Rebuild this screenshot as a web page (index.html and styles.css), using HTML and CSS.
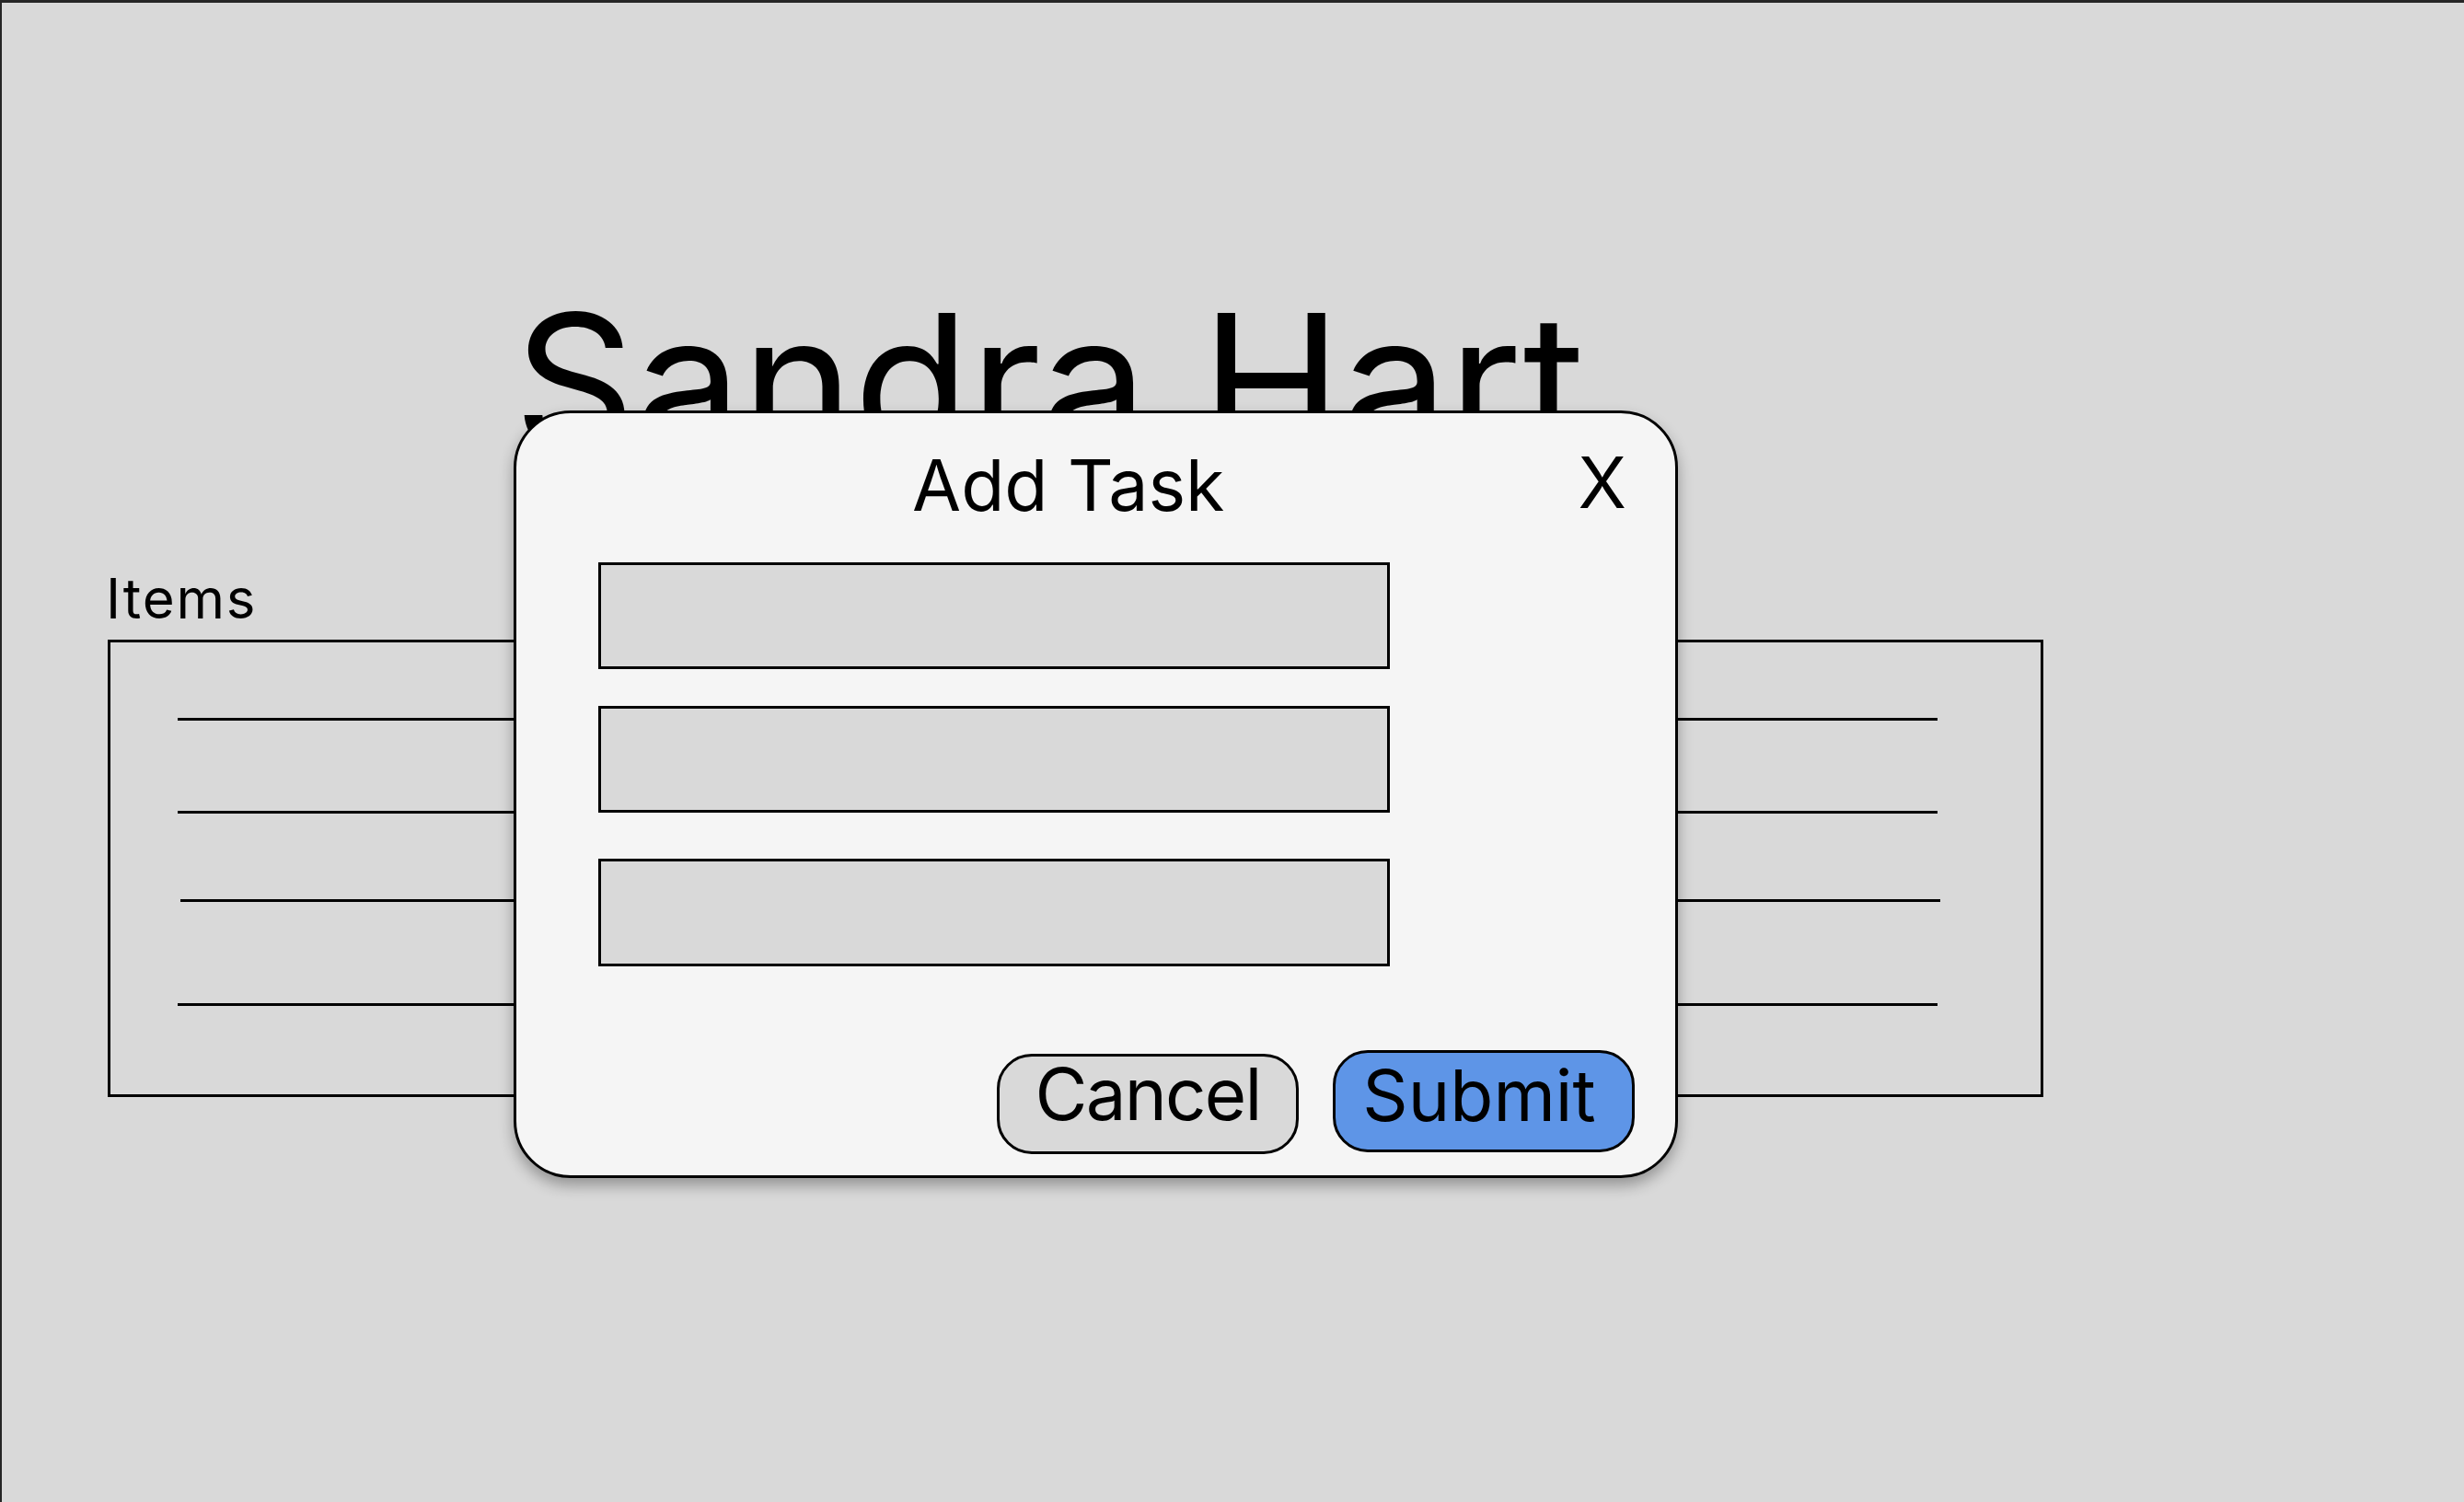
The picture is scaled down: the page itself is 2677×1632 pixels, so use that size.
FILE: index.html
```html
<!DOCTYPE html>
<html lang="en">
<head>
<meta charset="utf-8">
<title>Sandra Hart</title>
<link rel="stylesheet" href="styles.css">
</head>
<body>
<div class="screen">
  <h1 class="name">Sandra Hart</h1>
  <section class="items">
    <h2 class="items-label">Items</h2>
    <div class="items-box">
      <div class="item-line line-1"></div>
      <div class="item-line line-2"></div>
      <div class="item-line line-3"></div>
      <div class="item-line line-4"></div>
    </div>
  </section>
  <div class="modal">
    <div class="modal-head">
      <span class="modal-title">Add Task</span>
      <span class="modal-close">X</span>
    </div>
    <div class="fields">
      <div class="field field-1"></div>
      <div class="field field-2"></div>
      <div class="field field-3"></div>
    </div>
    <div class="actions">
      <button class="btn btn-cancel">Cancel</button>
      <button class="btn btn-submit">Submit</button>
    </div>
  </div>
</div>
</body>
</html>
```
FILE: styles.css
```css
html, body {
  margin: 0;
  padding: 0;
}
body {
  background: #d9d9d9;
  font-family: "Inter", "Noto Sans", sans-serif;
  color: #000;
}
.screen {
  position: relative;
  box-sizing: border-box;
  width: 2677px;
  height: 1632px;
  border-top: 3px solid #262626;
  border-left: 2px solid #262626;
  background: #d9d9d9;
  overflow: hidden;
  display: flex;
  flex-direction: column;
  align-items: flex-start;
}
.name {
  margin: 309px 0 0 556px;
  font-size: 206px;
  font-weight: 400;
  line-height: 1;
  white-space: nowrap;
}
.items {
  margin: 102px 0 0 115px;
  display: flex;
  flex-direction: column;
  align-items: flex-start;
}
.items-label {
  margin: 0 0 16px -2px;
  font-size: 60px;
  font-weight: 400;
  letter-spacing: 1.8px;
  line-height: 60px;
  height: 59px;
}
.items-box {
  box-sizing: border-box;
  width: 2103px;
  height: 497px;
  border: 3px solid #000;
  padding-left: 73px;
  display: flex;
  flex-direction: column;
  align-items: flex-start;
}
.item-line {
  width: 1912px;
  height: 0;
  border-top: 3px solid #000;
}
.line-1 { margin-top: 82px; }
.line-2 { margin-top: 98px; }
.line-3 { margin-top: 93px; margin-left: 3px; }
.line-4 { margin-top: 110px; }

.modal {
  position: absolute;
  left: 556px;
  top: 443px;
  box-sizing: border-box;
  width: 1265px;
  height: 834px;
  border: 3px solid #000;
  border-radius: 62px;
  background: #f5f5f5;
  box-shadow: 0 8px 16px rgba(0, 0, 0, 0.32);
  display: flex;
  flex-direction: column;
}
.modal-head {
  display: flex;
  align-items: flex-start;
  margin-top: 40px;
}
.modal-title {
  margin-left: 430px;
  font-size: 77px;
  line-height: 1;
}
.modal-close {
  margin-left: auto;
  margin-right: 53px;
  margin-top: -3px;
  font-size: 77px;
  line-height: 1;
}
.fields {
  display: flex;
  flex-direction: column;
  margin-left: 89px;
  margin-top: 45px;
}
.field {
  box-sizing: border-box;
  width: 860px;
  height: 116px;
  border: 3px solid #000;
  background: #d9d9d9;
}
.field-2 { margin-top: 40px; }
.field-3 { margin-top: 50px; height: 117px; }
.actions {
  display: flex;
  justify-content: flex-end;
  align-items: flex-start;
  gap: 37px;
  margin-top: 91px;
  margin-right: 44px;
}
.btn {
  box-sizing: border-box;
  width: 328px;
  margin: 0;
  border: 3px solid #000;
  border-radius: 38px;
  font-family: "Inter", "Noto Sans", sans-serif;
  font-size: 78px;
  line-height: 78px;
  color: #000;
  text-align: center;
  cursor: pointer;
}
.btn-cancel {
  margin-top: 4px;
  padding: 2px 0 23px;
  letter-spacing: -1.8px;
  background: #d9d9d9;
}
.btn-submit {
  padding: 7px 10px 20px 0;
  font-size: 77px;
  background: #5e95e7;
}
```
